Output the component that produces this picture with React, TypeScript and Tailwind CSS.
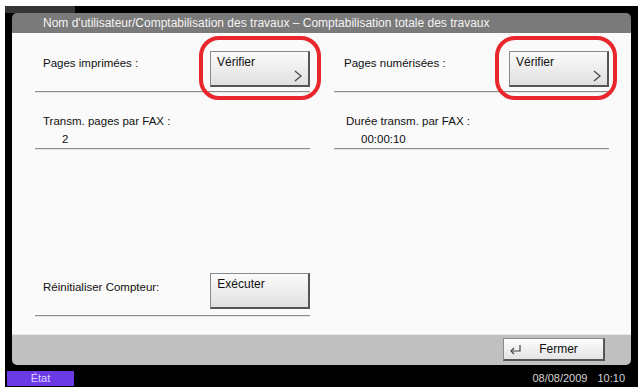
import React from "react";

const font = { fontFamily: '"Liberation Sans", Arial, sans-serif' };

function Chevron() {
  return (
    <svg width="8" height="12" viewBox="0 0 8 12" className="self-end">
      <polyline points="1,1 7,6 1,11" fill="none" stroke="#4a4a4a" strokeWidth="1.3" />
    </svg>
  );
}

function PanelButton({ label, chevron }: { label: string; chevron?: boolean }) {
  return (
    <div className="w-[100px] h-[36px] flex flex-col justify-between pl-[6px] pr-[6px] pt-[3px] pb-[3px] bg-gradient-to-b from-[#fbfbfb] to-[#e0e0e0] border border-[#8a8a8a] border-r-[2px] border-b-[2px] border-r-[#555] border-b-[#555] text-[12px] text-[#111] leading-[14px]">
      <span>{label}</span>
      {chevron && <Chevron />}
    </div>
  );
}

function Ring({ className }: { className: string }) {
  return (
    <div
      className={`absolute border-[4px] border-[#e8262c] rounded-[20px] pointer-events-none ${className}`}
    />
  );
}

function Line() {
  return <div className="h-px bg-[#8c8c8c] border-b border-[#e6e6e6] box-content" />;
}

export default function App() {
  return (
    <div className="w-[640px] h-[392px] bg-white pt-[6px] pl-[5px] pr-[2px] pb-[5px]" style={font}>
      <div className="h-full bg-black flex flex-col">
        <div className="h-[7px] flex">
          <div className="w-[70px] bg-[#363636]" />
        </div>
        <div className="flex-1 px-[7px] flex flex-col">
          <div className="flex-1 rounded-[5px] overflow-hidden flex flex-col">
            <div className="h-[20px] bg-[#7a7a7a] flex items-center pl-[31px] text-[12px] text-[#f4f4f4] whitespace-nowrap">
              Nom d'utilisateur/Comptabilisation des travaux – Comptabilisation totale des travaux
            </div>
            <div className="flex-1 bg-[#fafafa] border-b border-[#e8e8e8] flex gap-[24px] pl-[23px] pr-[22px] text-[11.5px] text-[#111] leading-[14px]">
              {/* left column */}
              <div className="w-[275px] flex flex-col">
                <div className="mt-[18px] h-[36px] flex items-start">
                  <span className="pl-[8px] pt-[5px] w-[176px]">Pages imprimées :</span>
                  <div className="relative">
                    <Ring className="-left-[11px] -right-[11px] -top-[15px] -bottom-[13px]" />
                    <PanelButton label="Vérifier" chevron />
                  </div>
                </div>
                <div className="mt-[4px]">
                  <Line />
                </div>
                <div className="mt-[21px] pl-[8px]">Transm. pages par FAX :</div>
                <div className="mt-[4px] pl-[27px]">2</div>
                <div className="mt-[2px]">
                  <Line />
                </div>
                <div className="mt-[123px] h-[36px] flex items-start">
                  <span className="pl-[8px] pt-[7px] w-[176px]">Réinitialiser Compteur:</span>
                  <PanelButton label="Exécuter" />
                </div>
                <div className="mt-[6px]">
                  <Line />
                </div>
              </div>
              {/* right column */}
              <div className="w-[275px] flex flex-col">
                <div className="mt-[18px] h-[36px] flex items-start">
                  <span className="pl-[10px] pt-[5px] w-[175px]">Pages numérisées :</span>
                  <div className="relative">
                    <Ring className="-left-[14px] -right-[8px] -top-[15px] -bottom-[13px]" />
                    <PanelButton label="Vérifier" chevron />
                  </div>
                </div>
                <div className="mt-[4px]">
                  <Line />
                </div>
                <div className="mt-[21px] pl-[12px]">Durée transm. par FAX :</div>
                <div className="mt-[4px] pl-[27px]">00:00:10</div>
                <div className="mt-[2px]">
                  <Line />
                </div>
              </div>
            </div>
            <div className="h-[30px] bg-[#c0c0c0] flex justify-end pt-[3px] pr-[26px]">
              <div className="w-[102px] h-[23px] flex items-center pl-[5px] bg-gradient-to-b from-[#fcfcfc] to-[#e4e4e4] border border-[#8a8a8a] border-r-[2px] border-b-[2px] border-r-[#555] border-b-[#555] text-[12px] text-[#111]">
                <svg width="13" height="11" viewBox="0 0 13 11">
                  <path d="M11 1 V7 H2" fill="none" stroke="#444" strokeWidth="1.2" />
                  <path d="M5 4 L2 7 L5 10" fill="none" stroke="#444" strokeWidth="1.2" />
                </svg>
                <span className="flex-1 text-center pr-[8px]">Fermer</span>
              </div>
            </div>
          </div>
        </div>
        <div className="h-[22px] flex items-start pt-[6px] pl-[2px] pr-[13px]">
          <div className="w-[67px] h-[15px] bg-[#6a3be4] text-[#dcd2ff] text-[11px] flex items-center justify-center">
            État
          </div>
          <div className="flex-1" />
          <div className="flex items-center gap-[10px] h-[15px] text-[11px] text-[#d4d4d4]">
            <span>08/08/2009</span>
            <span>10:10</span>
          </div>
        </div>
      </div>
    </div>
  );
}
